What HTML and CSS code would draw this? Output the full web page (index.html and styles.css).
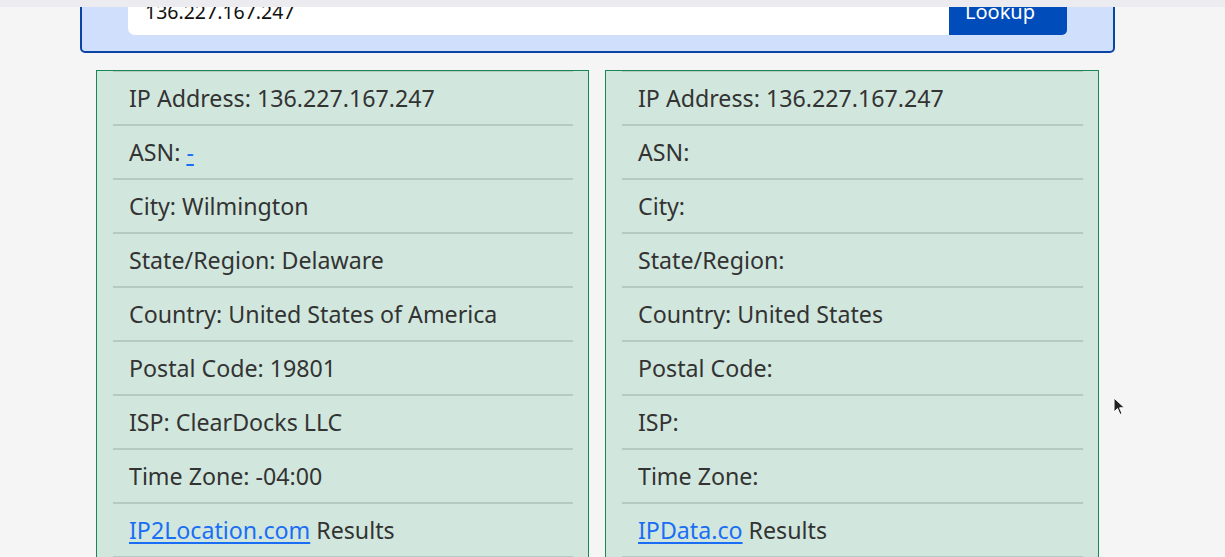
FILE: index.html
```html
<!DOCTYPE html>
<html lang="en">
<head>
<meta charset="utf-8">
<title>IP Lookup</title>
<link rel="stylesheet" href="styles.css">
</head>
<body>
<div class="topstrip"></div>
<main class="page">
  <form class="lookup">
    <div class="input-group">
      <input class="ip-input" type="text" value="136.227.167.247">
      <button class="btn" type="button">Lookup</button>
    </div>
  </form>
  <section class="results">
    <div class="card card-left">
      <ul class="list">
        <li>IP Address: 136.227.167.247</li>
        <li>ASN: <a href="#">-</a></li>
        <li>City: Wilmington</li>
        <li>State/Region: Delaware</li>
        <li>Country: United States of America</li>
        <li>Postal Code: 19801</li>
        <li>ISP: ClearDocks LLC</li>
        <li>Time Zone: -04:00</li>
        <li><a href="#">IP2Location.com</a> Results</li>
      </ul>
    </div>
    <div class="card card-right">
      <ul class="list">
        <li>IP Address: 136.227.167.247</li>
        <li>ASN:</li>
        <li>City:</li>
        <li>State/Region:</li>
        <li>Country: United States</li>
        <li>Postal Code:</li>
        <li>ISP:</li>
        <li>Time Zone:</li>
        <li><a href="#">IPData.co</a> Results</li>
      </ul>
    </div>
  </section>
</main>
<svg class="cursor" width="14" height="20" viewBox="0 0 14 20"><path d="M1 1 L1 15 L4.5 11.5 L7 17.5 L9 16.6 L6.6 10.8 L11.5 10.8 Z" fill="#222" stroke="#fff" stroke-width="1"/></svg>
</body>
</html>
```

FILE: styles.css
```css
html, body {
  margin: 0;
  padding: 0;
  overflow: hidden;
  height: 100%;
}
body {
  background: #f5f5f5;
  font-family: "Noto Sans", "Open Sans", sans-serif;
  color: #333333;
}
.topstrip {
  position: fixed;
  top: 0;
  left: 0;
  right: 0;
  height: 7px;
  background: #ececf0;
  z-index: 5;
}
.page {
  width: 1035px;
  margin-left: 80px;
  margin-top: -31px;
}
.lookup {
  margin: 0;
  background: #d0e0fc;
  border: 2px solid #0a45a6;
  border-radius: 5px;
  padding: 16px 46px 16px 46px;
}
.input-group {
  display: flex;
  height: 48px;
}
.ip-input {
  flex: 1;
  border: none;
  background: #ffffff;
  border-radius: 7px 0 0 7px;
  padding: 0 17px;
  font-family: inherit;
  font-size: 19.5px;
  color: #111;
  outline: none;
  margin: 0;
}
.btn {
  width: 118px;
  border: none;
  background: #004cba;
  color: #ffffff;
  border-radius: 0 5px 5px 0;
  font-family: inherit;
  font-size: 20px;
  text-align: left;
  padding: 0 0 0 16px;
  margin: 0;
}
.results {
  display: flex;
  gap: 16px;
  margin: 17px 0 0 16px;
}
.card {
  box-sizing: border-box;
  border: 1px solid #198754;
  background: #d1e7dd;
  padding: 0 15px 0 16px;
}
.card-left {
  width: 493px;
}
.card-right {
  width: 494px;
}
.list {
  list-style: none;
  margin: 0;
  padding: 0;
  border-top: 1px solid #b7cac1;
}
.list li {
  height: 52px;
  display: flex;
  align-items: center;
  padding-left: 16px;
  border-bottom: 2px solid #b7cac1;
  font-size: 23.2px;
  white-space: pre;
}
.list a {
  color: #1a6ef5;
  text-decoration: underline;
  text-underline-offset: 3px;
}
.cursor {
  position: fixed;
  left: 1113px;
  top: 397px;
}
```
